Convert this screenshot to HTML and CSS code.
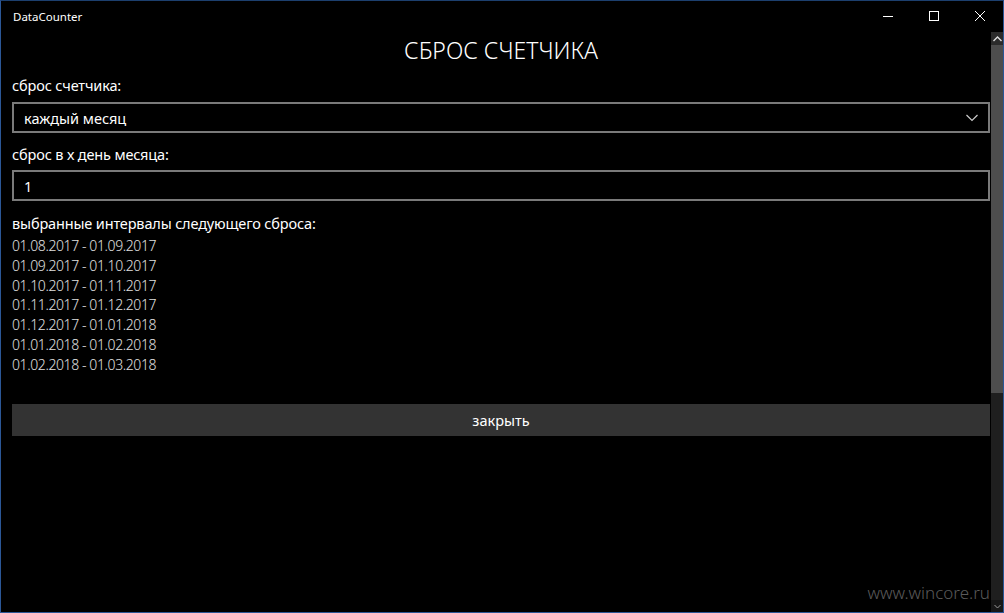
FILE: index.html
```html
<!DOCTYPE html>
<html lang="ru">
<head>
  <meta charset="UTF-8" />
  <title>DataCounter</title>
  <link rel="stylesheet" href="styles.css">
</head>
<body>
  <div class="window">
    <div class="titlebar">
      <span class="app-name">DataCounter</span>
      <div class="caption-buttons">
        <span class="cap-btn">
          <svg width="10" height="10" viewBox="0 0 10 10"><path d="M0 5.5h10" stroke="#fff" stroke-width="1"/></svg>
        </span>
        <span class="cap-btn">
          <svg width="10" height="10" viewBox="0 0 10 10"><rect x="0.5" y="0.5" width="9" height="9" fill="none" stroke="#fff" stroke-width="1"/></svg>
        </span>
        <span class="cap-btn">
          <svg width="10" height="10" viewBox="0 0 10 10"><path d="M0 0L10 10M10 0L0 10" stroke="#fff" stroke-width="1"/></svg>
        </span>
      </div>
    </div>

    <div class="body-row">
      <main class="content">
        <h1>СБРОС СЧЕТЧИКА</h1>

        <div class="field-label first">сброс счетчика:</div>
        <div class="combo">
          <span>каждый месяц</span>
          <svg width="12" height="8" viewBox="0 0 12 8"><path d="M0.5 1L6 6.5L11.5 1" fill="none" stroke="#ccc" stroke-width="1.2"/></svg>
        </div>

        <div class="field-label">сброс в х день месяца:</div>
        <div class="textbox">1</div>

        <div class="field-label intervals-title">выбранные интервалы следующего сброса:</div>
        <ul class="intervals">
          <li>01.08.2017 - 01.09.2017</li>
          <li>01.09.2017 - 01.10.2017</li>
          <li>01.10.2017 - 01.11.2017</li>
          <li>01.11.2017 - 01.12.2017</li>
          <li>01.12.2017 - 01.01.2018</li>
          <li>01.01.2018 - 01.02.2018</li>
          <li>01.02.2018 - 01.03.2018</li>
        </ul>

        <button class="close-btn">закрыть</button>
      </main>

      <div class="scrollbar">
        <div class="sb-arrow">
          <svg width="9" height="6" viewBox="0 0 9 6"><path d="M0.5 5L4.5 1L8.5 5" fill="none" stroke="#ddd" stroke-width="1.4"/></svg>
        </div>
        <div class="sb-thumb"></div>
        <div class="sb-track"></div>
        <div class="sb-arrow bottom">
          <svg width="7" height="5" viewBox="0 0 7 5"><path d="M0.5 1L3.5 4L6.5 1" fill="none" stroke="#999" stroke-width="1"/></svg>
        </div>
      </div>
    </div>

    <div class="watermark">www.wincore.ru</div>
  </div>
</body>
</html>
```

FILE: styles.css
```css
html, body {
  margin: 0;
  padding: 0;
  background: #000;
}
body {
  font-family: "Noto Sans", "Open Sans", sans-serif;
  color: #fff;
}
.window {
  width: 1004px;
  height: 613px;
  box-sizing: border-box;
  border: 1px solid #2b5797;
  border-top: 1px solid #1c3f6e;
  background: #000;
  display: flex;
  flex-direction: column;
  position: relative;
  overflow: hidden;
}
.titlebar {
  height: 31px;
  display: flex;
  align-items: center;
  justify-content: space-between;
  flex-shrink: 0;
}
.app-name {
  font-size: 11.5px;
  padding-left: 12px;
  margin-top: -1px;
}
.caption-buttons {
  display: flex;
  margin-top: -1px;
}
.cap-btn {
  width: 46px;
  height: 30px;
  display: flex;
  align-items: center;
  justify-content: center;
}
.body-row {
  flex: 1;
  display: flex;
}
.content {
  flex: 1;
  padding: 0 0 0 11px;
}
h1 {
  margin: 2px 0 0;
  font-weight: 300;
  font-size: 23px;
  text-align: center;
  line-height: 32px;
}
.field-label {
  font-size: 14.5px;
  line-height: 20px;
  letter-spacing: -0.15px;
  margin-top: 11px;
  margin-bottom: 6px;
}
.field-label.first {
  margin-top: 9px;
  margin-bottom: 7px;
}
.combo, .textbox {
  height: 27px;
  border: 2px solid #7a7a7a;
  display: flex;
  align-items: center;
  justify-content: space-between;
  padding: 0 10px 0 10px;
  font-size: 14.5px;
}
.textbox {
  margin-top: 1px;
}
.intervals-title {
  margin-top: 12px;
  margin-bottom: 0;
}
.intervals {
  list-style: none;
  margin: 0;
  padding: 0;
  margin-top: 3px;
}
.intervals li {
  font-size: 14px;
  line-height: 19.8px;
  letter-spacing: -0.4px;
  color: #e0e0e0;
  font-weight: 300;
}
.close-btn {
  display: block;
  width: 100%;
  height: 32px;
  margin-top: 29px;
  border: none;
  background: #333;
  color: #fff;
  font-family: inherit;
  font-size: 14.5px;
}
.scrollbar {
  width: 12px;
  margin-left: 1px;
  display: flex;
  flex-direction: column;
  background: #171717;
}
.sb-arrow {
  height: 13px;
  background: #2b2b2b;
  display: flex;
  align-items: center;
  justify-content: center;
}
.sb-arrow.bottom {
  height: 12px;
  background: #171717;
}
.sb-thumb {
  height: 348px;
  background: #4d4d4d;
}
.sb-track {
  flex: 1;
  background: #1f1f1f;
}
.watermark {
  position: absolute;
  right: 13px;
  bottom: 8px;
  font-size: 17px;
  font-weight: 300;
  color: #5a5a5a;
}
```
